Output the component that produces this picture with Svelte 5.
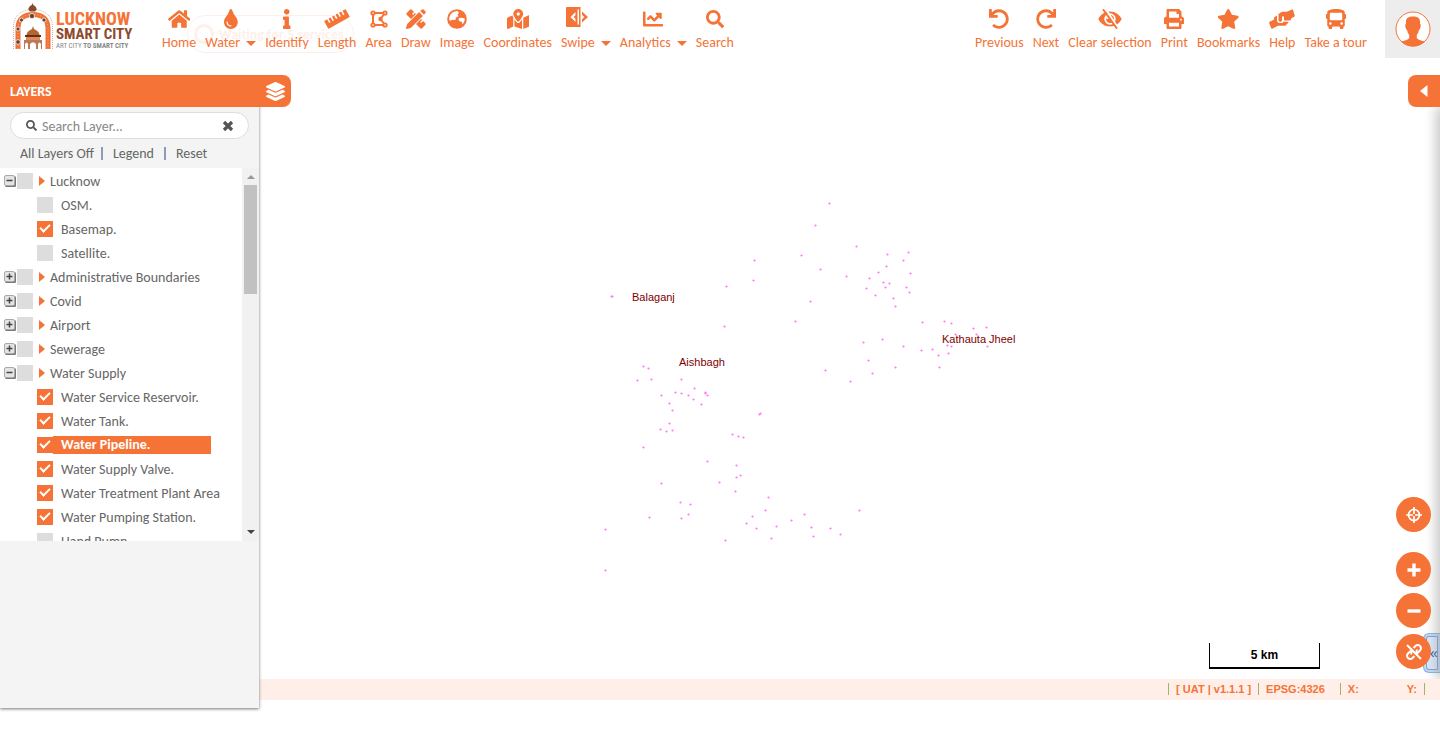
<script lang="ts">
  const fa = (w: number, d: string, extra = '') =>
    `<svg viewBox="0 0 ${w} 512" aria-hidden="true"><path fill="currentColor" ${extra} d="${d}"/></svg>`;
  const box = (w: number, body: string) =>
    `<svg viewBox="0 0 ${w} 20" aria-hidden="true" fill="currentColor">${body}</svg>`;

  const undo = 'M212.333 224.333H12c-6.627 0-12-5.373-12-12V12C0 5.373 5.373 0 12 0h48c6.627 0 12 5.373 12 12v78.112C117.773 39.279 184.26 7.47 258.175 8.007c136.906.994 246.448 111.623 246.157 248.532C504.041 393.258 393.12 504 256.333 504c-64.089 0-122.496-24.313-166.51-64.215-5.099-4.622-5.334-12.554-.467-17.42l33.967-33.967c4.474-4.474 11.662-4.717 16.401-.525C170.76 415.336 211.58 432 256.333 432c97.268 0 176-78.716 176-176 0-97.267-78.716-176-176-176-58.496 0-110.28 28.476-142.274 72.333h98.274c6.627 0 12 5.373 12 12v48c0 6.627-5.373 12-12 12z';
  const searchPath = 'M505 442.7L405.3 343c-4.5-4.5-10.6-7-17-7H372c27.6-35.3 44-79.7 44-128C416 93.1 322.9 0 208 0S0 93.1 0 208s93.1 208 208 208c48.3 0 92.7-16.4 128-44v16.3c0 6.4 2.5 12.5 7 17l99.7 99.7c9.4 9.4 24.6 9.4 33.9 0l28.3-28.3c9.4-9.4 9.4-24.6.1-34zM208 336c-70.7 0-128-57.2-128-128 0-70.7 57.2-128 128-128 70.7 0 128 57.2 128 128 0 70.7-57.2 128-128 128z';

  const icons: Record<string, string> = {
    home: fa(576, 'M280.37 148.26L96 300.11V464a16 16 0 0 0 16 16l112.06-.29a16 16 0 0 0 15.92-16V368a16 16 0 0 1 16-16h64a16 16 0 0 1 16 16v95.64a16 16 0 0 0 16 16.05L464 480a16 16 0 0 0 16-16V300L295.67 148.26a12.19 12.19 0 0 0-15.3 0zM571.6 251.47L488 182.56V44.05a12 12 0 0 0-12-12h-56a12 12 0 0 0-12 12v72.61L318.47 43a48 48 0 0 0-61 0L4.34 251.47a12 12 0 0 0-1.6 16.9l25.5 31A12 12 0 0 0 45.15 301l235.22-193.74a12.19 12.19 0 0 1 15.3 0L530.9 301a12 12 0 0 0 16.9-1.6l25.5-31a12 12 0 0 0-1.7-16.93z'),
    water: fa(352, 'M205.22 22.09c-7.94-28.78-49.44-30.12-58.44 0C100.01 179.85 0 222.72 0 333.91 0 432.35 78.72 512 176 512s176-79.65 176-178.09c0-111.75-99.79-153.34-146.78-311.82zM176 448c-61.75 0-112-50.25-112-112 0-8.84 7.16-16 16-16s16 7.16 16 16c0 44.11 35.89 80 80 80 8.84 0 16 7.16 16 16s-7.16 16-16 16z'),
    identify: fa(192, 'M20 424.229h20V279.771H20c-11.046 0-20-8.954-20-20V212c0-11.046 8.954-20 20-20h112c11.046 0 20 8.954 20 20v212.229h20c11.046 0 20 8.954 20 20V492c0 11.046-8.954 20-20 20H20c-11.046 0-20-8.954-20-20v-47.771c0-11.046 8.954-20 20-20zM96 0C56.235 0 24 32.235 24 72s32.235 72 72 72 72-32.235 72-72S135.764 0 96 0z'),
    length: box(26, '<g transform="rotate(-29 13 10)"><path fill-rule="evenodd" d="M1.5 5.5H4.2V9.6H5.8V5.5H8.2V9.6H9.8V5.5H12.2V9.6H13.8V5.5H16.2V9.6H17.8V5.5H20.2V9.6H21.8V5.5H24.5Q25.3 5.5 25.3 6.3V13.7Q25.3 14.5 24.5 14.5H1.5Q.7 14.5 .7 13.7V6.3Q.7 5.5 1.5 5.5Z"/></g>'),
    area: box(18, '<path fill="none" stroke="currentColor" stroke-width="2" d="M3 4v12M3 4h12M3 16h12M15 4L10.5 10L15 16"/><circle cx="3" cy="4" r="2.6"/><circle cx="15" cy="4" r="2.6"/><circle cx="3" cy="16" r="2.6"/><circle cx="15" cy="16" r="2.6"/><circle cx="10.5" cy="10" r="2.2"/><g fill="#fff"><circle cx="3" cy="4" r=".8"/><circle cx="15" cy="4" r=".8"/><circle cx="3" cy="16" r=".8"/><circle cx="15" cy="16" r=".8"/></g>'),
    draw: box(20, '<path d="M0.5 4.2L4.2.5Q5 0 5.8.7L8 2.9L6 4.9L7 5.9L9 3.9L10 5L5 10L.7 5.8Q0 5 .5 4.2ZM10 15L15 10L16.1 11L14.1 13L15.1 14L17.1 12L19.3 14.2Q20 15 19.5 15.8L15.8 19.5Q15 20 14.2 19.3Z"/><path d="M13.1 3.1L16.9 6.9L5 18.8L.9 20Q0 20 0 19.1L1.2 15ZM14.2 2L16 .5Q17 0 17.8.7L19.3 2.2Q20 3 19.5 4L18 5.8Z"/>'),
    image: box(20, '<circle cx="10" cy="10" r="9.8"/><path fill="#fff" d="M10.500 2A8 8 0 0 0 2.300 8.500L2.200 11Q4 12.500 5.500 10.500Q7 11.500 8.500 10.800L9 8.500L11.500 7.300L10.500 5.500L12 4ZM11.500 9.500Q14 8 17.800 9.500Q18 12.500 15.800 15.300Q14.800 14.800 15 13L12 12Z"/>'),
    coordinates: fa(576, 'M288 0c-69.59 0-126 56.41-126 126 0 56.26 82.35 158.8 113.9 196.02 6.39 7.54 17.82 7.54 24.2 0C331.65 284.8 414 182.26 414 126 414 56.41 357.59 0 288 0zm0 168c-23.2 0-42-18.8-42-42s18.8-42 42-42 42 18.8 42 42-18.8 42-42 42zM20.12 215.95A32.006 32.006 0 0 0 0 245.66v250.32c0 11.32 11.43 19.06 21.94 14.86L160 448V214.92c-8.84-15.98-16.07-31.54-21.25-46.42L20.12 215.95zM288 359.67c-14.07 0-27.38-6.18-36.51-16.96-19.66-23.2-40.57-49.62-59.49-76.72v182l192 64V266c-18.92 27.09-39.82 53.52-59.49 76.72-9.13 10.77-22.44 16.95-36.51 16.95zm266.06-198.51L416 224v288l139.88-55.95A31.996 31.996 0 0 0 576 426.34V176.02c0-11.32-11.43-19.06-21.94-14.86z'),
    swipe: box(22, '<path fill-rule="evenodd" d="M1 0H14.5V20H1Q0 20 0 19V1Q0 0 1 0ZM11.500 2.500V17.500H13V2.500ZM9.500 5L4.500 10L9.500 15V11.800L7.600 10L9.500 8.200Z"/><path d="M16 4.500L22 10L16 15.500V12.300L18.400 10L16 7.700Z"/>'),
    analytics: fa(512, 'M496 384H64V80c0-8.84-7.16-16-16-16H16C7.16 64 0 71.16 0 80v336c0 17.67 14.33 32 32 32h464c8.84 0 16-7.16 16-16v-32c0-8.84-7.16-16-16-16zM464 96H345.94c-21.38 0-32.09 25.85-16.97 40.97l32.4 32.4L288 242.75l-73.37-73.37c-12.5-12.5-32.76-12.5-45.25 0l-68.69 68.69c-6.25 6.25-6.25 16.38 0 22.63l22.62 22.62c6.25 6.25 16.38 6.25 22.63 0L192 237.25l73.37 73.37c12.5 12.5 32.76 12.5 45.25 0l96-96 32.4 32.4c15.12 15.12 40.97 4.41 40.97-16.97V112c.01-8.84-7.15-16-15.99-16z'),
    search: fa(512, searchPath),
    previous: fa(512, undo),
    next: fa(512, undo, 'transform="matrix(-1 0 0 1 512 0)"'),
    clear: box(24, '<path fill-rule="evenodd" d="M12 2.5C17.5 2.5 21.5 5.8 23.7 10C21.5 14.2 17.5 17.5 12 17.5S2.5 14.2.3 10C2.5 5.8 6.5 2.5 12 2.5ZM12 4.3A5.7 5.7 0 0 0 12 15.7A5.7 5.7 0 0 0 12 4.3Z"/><path d="M12 6A4 4 0 1 1 8.1 9.3A2 2 0 0 0 11.5 7.5Z"/><path stroke="#fff" stroke-width="2" d="M7.3 -.5L20 19"/><path stroke="currentColor" stroke-width="2" stroke-linecap="round" d="M5.5 1L18.5 19"/>'),
    print: fa(512, 'M448 192V77.25c0-8.49-3.37-16.62-9.37-22.63L393.37 9.37c-6-6-14.14-9.37-22.63-9.37H96C78.33 0 64 14.33 64 32v160c-35.35 0-64 28.65-64 64v112c0 8.84 7.16 16 16 16h48v96c0 17.67 14.33 32 32 32h320c17.67 0 32-14.33 32-32v-96h48c8.84 0 16-7.16 16-16V256c0-35.35-28.65-64-64-64zm-64 256H128v-96h256v96zm0-224H128V64h192v48c0 8.84 7.16 16 16 16h48v96zm48 72c-13.25 0-24-10.75-24-24 0-13.26 10.75-24 24-24s24 10.74 24 24c0 13.25-10.75 24-24 24z'),
    bookmarks: fa(576, 'M259.3 17.8L194 150.2 47.9 171.5c-26.2 3.8-36.7 36.1-17.7 54.6l105.7 103-25 145.5c-4.5 26.3 23.2 46 46.4 33.7L288 439.6l130.7 68.7c23.2 12.2 50.9-7.4 46.4-33.7l-25-145.5 105.7-103c19-18.5 8.5-50.8-17.7-54.6L382 150.2 316.7 17.8c-11.7-23.6-45.6-23.9-57.4 0z'),
    help: box(26, '<path d="M9 5.5L12 3.2Q12.6 2.8 13.3 2.8H17.8L23 .4Q23.7 0 24 .7L25.7 6.5Q26 7.3 25.2 7.7L22 9.5V10.2Q22 11.5 20.5 11.5H15V7.5H13V11.2Q13 12.7 11.4 12.7T9.5 11.2V5.8Z"/><path d="M8 6.5V11.2Q8 14 11.2 14T14.4 12.7H19.5Q19.5 14.5 18 14.7Q17.6 16.7 15.5 16.7H9L3.2 19.7Q2.5 20 2.2 19.3L.2 14Q0 13.2 .7 12.8L5 10.4V9.2Q5 8.4 5.7 7.9Z"/>'),
    tour: fa(512, 'M488 128h-8V80c0-44.8-99.2-80-224-80S32 35.2 32 80v48h-8c-13.25 0-24 10.74-24 24v80c0 13.25 10.75 24 24 24h8v160c0 17.67 14.33 32 32 32v32c0 17.67 14.33 32 32 32h32c17.67 0 32-14.33 32-32v-32h192v32c0 17.67 14.33 32 32 32h32c17.67 0 32-14.33 32-32v-32h6.4c16 0 25.6-12.8 25.6-25.6V256h8c13.25 0 24-10.75 24-24v-80c0-13.26-10.75-24-24-24zM112 400c-17.67 0-32-14.33-32-32s14.33-32 32-32 32 14.33 32 32-14.33 32-32 32zm16-112c-17.67 0-32-14.33-32-32V128c0-17.67 14.33-32 32-32h256c17.67 0 32 14.33 32 32v128c0 17.67-14.33 32-32 32H128zm272 112c-17.67 0-32-14.33-32-32s14.33-32 32-32 32 14.33 32 32-14.33 32-32 32z'),
    layers: fa(512, 'M12.41 148.02l232.94 105.67c6.8 3.09 14.49 3.09 21.29 0l232.94-105.67c16.55-7.51 16.55-32.52 0-40.03L266.65 2.31a25.607 25.607 0 0 0-21.29 0L12.41 107.98c-16.55 7.51-16.55 32.53 0 40.04zm487.18 88.28l-58.09-26.33-161.64 73.27c-7.56 3.43-15.59 5.17-23.86 5.17s-16.29-1.74-23.86-5.17L70.51 209.97l-58.1 26.33c-16.55 7.5-16.55 32.5 0 40l232.94 105.59c6.8 3.08 14.49 3.08 21.29 0L499.59 276.3c16.55-7.5 16.55-32.5 0-40zm0 127.8l-57.87-26.23-161.86 73.37c-7.56 3.43-15.59 5.17-23.86 5.17s-16.29-1.74-23.86-5.17L70.29 337.87 12.41 364.1c-16.55 7.5-16.55 32.5 0 40l232.94 105.59c6.8 3.08 14.49 3.08 21.29 0L499.59 404.1c16.55-7.5 16.55-32.5 0-40z'),
  };

  const mainTools = [
    { icon: 'home', label: 'Home' },
    { icon: 'water', label: 'Water', menu: true },
    { icon: 'identify', label: 'Identify' },
    { icon: 'length', label: 'Length' },
    { icon: 'area', label: 'Area' },
    { icon: 'draw', label: 'Draw' },
    { icon: 'image', label: 'Image' },
    { icon: 'coordinates', label: 'Coordinates' },
    { icon: 'swipe', label: 'Swipe', menu: true },
    { icon: 'analytics', label: 'Analytics', menu: true },
    { icon: 'search', label: 'Search' },
  ];
  const sideTools = [
    { icon: 'previous', label: 'Previous' },
    { icon: 'next', label: 'Next' },
    { icon: 'clear', label: 'Clear selection' },
    { icon: 'print', label: 'Print' },
    { icon: 'bookmarks', label: 'Bookmarks' },
    { icon: 'help', label: 'Help' },
    { icon: 'tour', label: 'Take a tour' },
  ];

  type Layer = { name: string; on: boolean; selected?: boolean };
  type Group = { name: string; open: boolean; on: boolean; layers: Layer[] };
  let groups: Group[] = $state([
    { name: 'Lucknow', open: true, on: false, layers: [
      { name: 'OSM.', on: false },
      { name: 'Basemap.', on: true },
      { name: 'Satellite.', on: false },
    ] },
    { name: 'Administrative Boundaries', open: false, on: false, layers: [] },
    { name: 'Covid', open: false, on: false, layers: [] },
    { name: 'Airport', open: false, on: false, layers: [] },
    { name: 'Sewerage', open: false, on: false, layers: [] },
    { name: 'Water Supply', open: true, on: false, layers: [
      { name: 'Water Service Reservoir.', on: true },
      { name: 'Water Tank.', on: true },
      { name: 'Water Pipeline.', on: true, selected: true },
      { name: 'Water Supply Valve.', on: true },
      { name: 'Water Treatment Plant Area', on: true },
      { name: 'Water Pumping Station.', on: true },
      { name: 'Hand Pump.', on: false },
    ] },
  ]);
  let query = $state('');

  // Asset positions on the map canvas
  const points = [
    [829, 203], [815, 225], [856, 246], [801, 255], [820, 269], [846, 276], [887, 254], [908, 252], [903, 260], [886, 266],
    [878, 272], [910, 273], [869, 278], [883, 282], [889, 283], [885, 287], [866, 288], [875, 295], [906, 287], [909, 292],
    [893, 298], [895, 306], [810, 301], [795, 321], [922, 322], [944, 321], [951, 323], [973, 328], [986, 327], [955, 334],
    [976, 334], [882, 339], [863, 342], [903, 346], [921, 350], [932, 349], [947, 345], [951, 346], [948, 353], [938, 355],
    [987, 346], [939, 367], [895, 367], [868, 360], [872, 373], [825, 370], [850, 381], [754, 260], [753, 280], [726, 286],
    [724, 326], [611, 296], [612, 296], [643, 366], [648, 368], [637, 380], [651, 379], [681, 379], [675, 392], [681, 393],
    [688, 395], [694, 388], [705, 392], [705, 393], [707, 395], [693, 399], [701, 404], [661, 395], [669, 403], [672, 410],
    [669, 423], [660, 429], [666, 431], [672, 430], [643, 447], [759, 414], [760, 413], [732, 434], [738, 436], [743, 437],
    [707, 461], [736, 465], [740, 475], [736, 477], [719, 482], [735, 491], [661, 483], [680, 502], [690, 504], [688, 514],
    [681, 518], [649, 517], [605, 529], [605, 570], [768, 497], [765, 510], [752, 516], [746, 523], [756, 528], [776, 526],
    [791, 520], [804, 514], [811, 527], [813, 536], [830, 528], [840, 534], [859, 510], [771, 538], [725, 540],
  ];
  const places = [
    { name: 'Balaganj', x: 632, y: 301 },
    { name: 'Aishbagh', x: 679, y: 366 },
    { name: 'Kathauta Jheel', x: 942, y: 343 },
  ];
  // Canvas origin inside the viewport
  const originX = 259;
  const originY = 75;
</script>

{#snippet tool(t: { icon: string; label: string; menu?: boolean })}
  <button class="tool" type="button">
    <span class="glyph {t.icon}">{@html icons[t.icon]}</span>
    <span class="name">{t.label}{#if t.menu}<i class="caret"></i>{/if}</span>
  </button>
{/snippet}

<header>
  <a class="brand" href="#home" aria-label="Lucknow Smart City">
    <svg class="emblem" viewBox="0 0 42 48" aria-hidden="true">
      <path d="M1.5 46V24C1.5 13 9 6.5 21 6.5S40.500 13 40.500 24V46" fill="none" stroke="#c9b3a6" stroke-width="1" stroke-dasharray="1 1" />
      <path d="M6 46V25C6 16 12 11.500 21 11.500S36 16 36 25V46" fill="none" stroke="#ee7238" stroke-width="5" />
      <path d="M6 46V25C6 16 12 11.500 21 11.500S36 16 36 25V46" fill="none" stroke="#f8b08a" stroke-width="1" stroke-dasharray="1 2" />
      <g fill="#6a4030" stroke="#fff" stroke-width=".7"><circle cx="20" cy="13" r="2.600" /><circle cx="9.500" cy="17" r="2" /><circle cx="32" cy="17" r="2" /><circle cx="6" cy="26" r="2" /><circle cx="6" cy="39" r="2.300" /></g>
      <path d="M20.500 0L21.300 2Q25 4 24.500 7L23 8.500H18L16.500 7Q16 4 19.700 2Z" fill="#8a4a2a" />
      <path d="M21 23L22 26Q28 28.500 27.500 33H14.500Q14 28.500 20 26Z" fill="#b5662f" />
      <path d="M13 32H29V34H13Z" fill="#5a3020" />
      <path d="M14 34H28V37H14Z" fill="#e6895a" />
      <path fill-rule="evenodd" d="M12 37H30V46H12ZM13 46V41Q14.500 38 16 41V46ZM18 46V41Q21 37.500 24 41V46ZM26 46V41Q27.500 38 29 41V46Z" fill="#b97a58" />
    </svg>
    <span class="wordmark">
      <strong>LUCKNOW</strong>
      <strong class="brown">SMART CITY</strong>
      <small>ART CITY <b>TO SMART CITY</b></small>
    </span>
  </a>
  <nav class="tools" aria-label="Map tools">
    {#each mainTools as t}{@render tool(t)}{/each}
  </nav>
  <nav class="tools end" aria-label="View tools">
    {#each sideTools as t}{@render tool(t)}{/each}
  </nav>
  <button class="user" type="button" aria-label="Account">
    <svg viewBox="0 0 36 36" aria-hidden="true"><circle cx="18" cy="18" r="17" fill="#fff" stroke="#f57336" stroke-width="1" /><path d="M18 5.500C23 5.500 25.500 7 25 12.500Q26.300 13.500 25.400 16.500Q25 18.500 24 19Q23.500 22 21.800 23.800V27Q23 29 30 30.500A17 17 0 0 1 6 30.500Q13 29 14.200 27V23.800Q12.500 22 12 19Q11 18.500 10.600 16.500Q9.700 13.500 11 12.500C10.500 7 13 5.500 18 5.500Z" fill="#f57336" /></svg>
  </button>
  <div class="toast" role="status"><i></i>Waiting for 5 services</div>
</header>

<main>
  <aside>
    <div class="title">
      <h2>LAYERS</h2>
      <button type="button" aria-label="Toggle layers">{@html icons.layers}</button>
    </div>
    <div class="filter">
      <span class="lens">{@html icons.search}</span>
      <input type="text" aria-label="Search Layer" placeholder="Search Layer..." bind:value={query} />
      <button type="button" aria-label="Clear search" onclick={() => (query = '')}>
        <svg viewBox="0 0 12 12" aria-hidden="true"><path d="M2 2L10 10M10 2L2 10" stroke="#555" stroke-width="3.200" /></svg>
      </button>
    </div>
    <div class="links">
      <button type="button">All Layers Off</button>
      <button type="button">Legend</button>
      <button type="button">Reset</button>
    </div>
    <div class="tree">
      <ul>
        {#each groups as g}
          <li>
            <div class="row">
              <button class="expand" type="button" aria-label={g.name} onclick={() => (g.open = !g.open)}>
                <svg viewBox="0 0 12 12" aria-hidden="true"><rect x="1" y="1" width="11" height="11" rx="1.500" fill="#777" /><rect x=".5" y=".5" width="10" height="10" rx="1.500" fill="#e4e4e4" stroke="#aaa" /><path d={g.open ? 'M2.500 5.500H8.500' : 'M2.500 5.500H8.500M5.500 2.500V8.500'} stroke="#444" stroke-width="1.500" /></svg>
              </button>
              <label><input type="checkbox" bind:checked={g.on} /><i class="arrow"></i><span>{g.name}</span></label>
            </div>
            {#if g.open}
              <ul>
                {#each g.layers as l}
                  <li class="row leaf">
                    <label class:selected={l.selected}><input type="checkbox" bind:checked={l.on} /><span>{l.name}</span></label>
                  </li>
                {/each}
              </ul>
            {/if}
          </li>
        {/each}
      </ul>
      <div class="scrollbar"><i class="up"></i><i class="thumb"></i><i class="down"></i></div>
    </div>
  </aside>

  <section class="map" aria-label="Map">
    <svg class="canvas" aria-hidden="true">
      {#each points as [x, y]}
        <circle cx={x - originX + 0.5} cy={y - originY + 0.5} r="1.1" fill="#ff77f5" />
      {/each}
      {#each places as p}
        <text x={p.x - originX} y={p.y - originY}>{p.name}</text>
      {/each}
    </svg>
    <div class="scale">5 km</div>
    <button class="chevrons" type="button" aria-label="Expand">«</button>
    <div class="edge"></div>
    <button class="drawer" type="button" aria-label="Open panel"><svg viewBox="0 0 8 12" aria-hidden="true"><path d="M7.500 0V12L0 6Z" fill="#fff" /></svg></button>
    <div class="controls">
      <button class="locate" type="button" aria-label="Locate"><svg viewBox="0 0 16 16" aria-hidden="true"><g fill="none" stroke="#fff" stroke-width="1.700"><circle cx="8" cy="8" r="5.500" /><path d="M8 0V7M8 9V16M0 8H7M9 8H16" /></g></svg></button>
      <button type="button" aria-label="Zoom in"><svg viewBox="0 0 16 16" aria-hidden="true"><path d="M8 1.500V14.500M1.500 8H14.500" stroke="#fff" stroke-width="3.400" /></svg></button>
      <button type="button" aria-label="Zoom out"><svg viewBox="0 0 16 16" aria-hidden="true"><path d="M1.500 8H14.500" stroke="#fff" stroke-width="3.400" /></svg></button>
      <button type="button" aria-label="Unlink"><svg viewBox="0 0 16 16" aria-hidden="true"><g fill="none" stroke="#fff" stroke-width="2"><path d="M7.500 4L9.500 2A3 3 0 0 1 14 6.500L11 9.500M8.500 12L6.500 14A3 3 0 0 1 2 9.500L5 6.500M5.500 10.500Q4.500 8.500 6 7M10.500 5.500Q11.500 7.500 10 9M1 1L15 15" /></g></svg></button>
    </div>
  </section>

  <footer>
    <span>[ UAT | v1.1.1 ]</span>
    <span class="epsg">EPSG:4326</span>
    <span class="coords"><b>X:</b><b>Y:</b></span>
  </footer>
</main>

<style>
  :global(body) { margin: 0; background: #fff; font-family: Carlito, Calibri, Lato, sans-serif; color: #666; }
  :global(#app) { min-height: 100vh; display: flex; flex-direction: column; }
  button { font: inherit; color: inherit; background: none; border: 0; padding: 0; cursor: pointer; }
  ul { list-style: none; margin: 0; padding: 0; }

  header { position: relative; display: flex; align-items: flex-start; color: #f57336; height: 75px; }
  .brand { display: flex; gap: 2px; width: 150px; padding: 3px 0 0 12px; box-sizing: border-box; text-decoration: none; }
  .emblem { width: 42px; height: 48px; flex: none; }
  .wordmark { display: flex; flex-direction: column; font-family: "Liberation Sans Narrow", "Roboto Condensed", Roboto, sans-serif; padding-top: 8px; color: #f57336; white-space: nowrap; }
  .wordmark strong { font-size: 18px; line-height: 16px; }
  .wordmark .brown { color: #8e4a2c; font-size: 15px; line-height: 15px; }
  .wordmark small { font-size: 7px; line-height: 9px; color: #888; }

  .tools { display: flex; gap: 9px; padding: 5px 0 0 12px; font-size: 14px; }
  .tools.end { margin-left: auto; padding-right: 18px; }
  .tool { display: flex; flex-direction: column; align-items: center; white-space: nowrap; }
  .glyph { height: 28px; display: flex; align-items: center; }
  .glyph :global(svg) { display: block; height: 20px; }
  .search :global(svg) { height: 18px; }
  .swipe { align-self: flex-start; padding: 0 0 4px 5px; height: 24px; }
  .name { line-height: 20px; }
  .caret { display: inline-block; margin-left: 6px; border: 5px solid transparent; border-top-color: #f57336; border-bottom: 0; vertical-align: 1px; }
  .user { width: 55px; height: 58px; background: #ededed; flex: none; display: flex; align-items: center; justify-content: center; }
  .user svg { width: 36px; height: 36px; }
  .toast { position: absolute; left: 187px; top: 15px; height: 38px; box-sizing: border-box; display: flex; align-items: center; gap: 5px; padding: 0 10px 0 6px; border: 1px solid; border-radius: 19px; font-size: 14px; font-weight: bold; opacity: .1; pointer-events: none; }
  .toast i { width: 14px; height: 14px; border: 3px solid; border-radius: 50%; }

  main { display: grid; grid-template-columns: 259px 1fr; grid-template-rows: 1fr 21px; height: calc(100vh - 120px); }
  aside { grid-row: 1 / 3; background: #f4f4f4; box-shadow: 0 1px 3px #777; margin-bottom: -8px; position: relative; z-index: 1; font-size: 14px; clip-path: inset(0 -40px -6px 0); }
  .title { display: flex; align-items: center; justify-content: space-between; width: 291px; height: 32px; box-sizing: border-box; padding: 0 6px 0 10px; background: #f57336; color: #fff; border-radius: 0 8px 8px 0; }
  .title h2 { margin: 0; font-size: 14px; }
  .title :global(svg) { display: block; width: 19px; height: 19px; }
  .filter { display: flex; align-items: center; gap: 5px; margin: 5px 10px 0 10px; height: 27px; box-sizing: border-box; border: 1px solid #ddd; border-radius: 14px; background: #fff; padding: 0 14px 0 15px; }
  .lens :global(svg) { display: block; width: 11px; height: 11px; color: #555; }
  .filter input { flex: 1; min-width: 0; border: 0; outline: 0; padding: 2px 0 0; background: none; font: inherit; }
  .filter input::placeholder { color: #888; }
  .filter svg { display: block; width: 12px; height: 12px; }
  .links { display: flex; align-items: center; height: 29px; padding-left: 12px; }
  .links button { padding: 0 7px 0 8px; line-height: 13px; }
  .links button + button { border-left: 2px solid #8e9abb; padding: 0 10px; }
  .tree { display: flex; justify-content: space-between; height: 50vh; background: #fff; overflow: hidden; }
  .tree > ul { padding-top: 1px; }
  .row, .row label { display: flex; align-items: center; height: 24px; white-space: nowrap; }
  .row { padding-left: 4px; gap: 1px; }
  .expand svg { display: block; width: 12px; height: 12px; }
  .leaf { padding-left: 37px; }
  input[type='checkbox'] { appearance: none; flex: none; width: 16px; height: 16px; margin: 0; background: #ddd; position: relative; }
  input[type='checkbox']:checked { background: #f57336; }
  input[type='checkbox']:checked::before { content: ''; position: absolute; left: 3px; top: 3px; width: 8px; height: 4px; border: solid #fff; border-width: 0 0 2px 2px; transform: rotate(-45deg); }
  .arrow { margin: 0 5px 0 6px; border: 5px solid transparent; border-left: 6px solid #f57336; border-right: 0; }
  .leaf span { padding-left: 8px; }
  .leaf .selected span { width: 150px; line-height: 18px; background: #f57336; color: #fff; font-weight: bold; }
  .scrollbar { width: 17px; background: #f1f1f1; display: flex; flex-direction: column; align-items: center; }
  .up { margin: 7px 0 6px; border: 4px solid transparent; border-top: 0; border-bottom-color: #999; }
  .thumb { width: 13px; height: 109px; background: #c1c1c1; }
  .down { margin: auto 0 7px; border: 4px solid transparent; border-bottom: 0; border-top-color: #444; }

  .map { position: relative; overflow: hidden; }
  .canvas { position: absolute; inset: 0; width: 100%; height: 100%; font: 11px "Liberation Sans", Arial, sans-serif; fill: #800000; }
  .scale { position: absolute; right: 120px; bottom: 10px; width: 109px; height: 24px; border: solid #000; border-width: 0 1px 2px; text-align: center; color: #000; font: bold 12px/24px "Liberation Sans", Arial, sans-serif; }
  .edge { position: absolute; right: -6px; top: 32px; bottom: 0; width: 6px; box-shadow: 0 0 14px 1px #999; }
  .drawer { position: absolute; right: 0; top: 0; width: 32px; height: 32px; background: #f57336; border-radius: 8px 0 0 8px; display: grid; place-items: center; }
  .drawer svg { width: 8px; height: 12px; }
  .chevrons { position: absolute; right: 0; bottom: 6px; width: 17px; height: 40px; padding-left: 4px; box-sizing: border-box; background: #dceafa; border: 1px solid #8db2e3; border-right: 0; border-radius: 6px 0 0 6px; box-shadow: inset 0 0 0 2px #c5dbf5, inset 0 0 0 3px #7aa3dd; font: 14px "Liberation Sans", sans-serif; color: #2b4a9b; }
  .controls { position: absolute; right: 9px; bottom: 10px; display: flex; flex-direction: column; gap: 6px; }
  .controls button { width: 35px; height: 35px; border-radius: 50%; background: #f57336; display: grid; place-items: center; }
  .controls svg { width: 16px; height: 16px; }
  .controls .locate { margin-bottom: 14px; }

  footer { display: flex; align-items: center; justify-content: flex-end; padding: 0 15px 1px 0; background: #ffefe8; color: #f57336; font: bold 11px/12px "Liberation Sans", Arial, sans-serif; }
  footer span { border-left: 1px solid #9fb36b; padding: 0 7px; }
  footer .epsg { padding-right: 15px; }
  footer .coords { display: flex; gap: 48px; border-right: 1px solid #9fb36b; }
</style>
